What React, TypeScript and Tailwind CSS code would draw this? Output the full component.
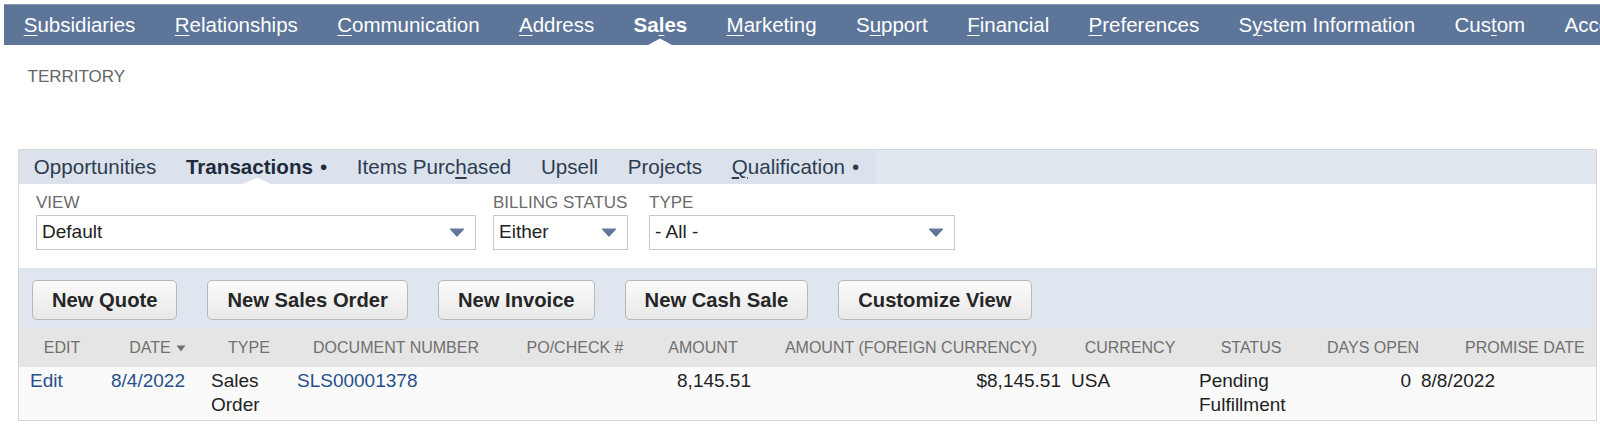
import React from "react";

type NavItem = { pre: string; u: string; post: string; active?: boolean };

const NAV: NavItem[] = [
  { pre: "", u: "S", post: "ubsidiaries" },
  { pre: "", u: "R", post: "elationships" },
  { pre: "", u: "C", post: "ommunication" },
  { pre: "", u: "A", post: "ddress" },
  { pre: "Sa", u: "l", post: "es", active: true },
  { pre: "", u: "M", post: "arketing" },
  { pre: "S", u: "u", post: "pport" },
  { pre: "", u: "F", post: "inancial" },
  { pre: "", u: "P", post: "references" },
  { pre: "S", u: "y", post: "stem Information" },
  { pre: "Cus", u: "t", post: "om" },
  { pre: "Accounting", u: "", post: "" },
];

function Arrow() {
  return (
    <svg width="16" height="9" viewBox="0 0 16 9" className="shrink-0">
      <path d="M1.5 1.2 L14.5 1.2 L8 8 Z" fill="#5f7699" stroke="#5f7699" strokeWidth="1.2" strokeLinejoin="round" />
    </svg>
  );
}

function Field({ label, value, w, ml }: { label: string; value: string; w: string; ml: string }) {
  return (
    <div className={`${w} ${ml} shrink-0`}>
      <div className="text-[17px] leading-[20px] text-[#6b6b6b] whitespace-nowrap">{label}</div>
      <div className="mt-[2px] h-[35px] border border-[#c8c8c8] bg-white flex items-center justify-between pl-[5px] pr-[10px] text-[19px] text-[#222]">
        <span>{value}</span>
        <Arrow />
      </div>
    </div>
  );
}

function Btn({ children }: { children: React.ReactNode }) {
  return (
    <div className="h-[40px] px-[19px] rounded-[5px] border border-[#b8b8b8] bg-linear-to-b from-[#fbfbfb] to-[#e8e8e8] flex items-center text-[20.2px] font-bold text-[#262626] whitespace-nowrap">
      {children}
    </div>
  );
}

const HEAD = "bg-[#e5e5e5] h-[38px] flex items-center text-[16px] text-[#707070] whitespace-nowrap";
const CELL = "bg-[#fafafa] pt-[2px] pb-[4px] text-[19px] leading-[23.5px] text-[#222]";
const LINK = "text-[#28508c]";

export default function App() {
  return (
    <div className="w-[1600px] h-[430px] bg-white overflow-hidden font-['Liberation_Sans',Arial,sans-serif]">
      {/* top nav */}
      <div className="ml-[4px] mt-[4px] w-[1596px] h-[41px] bg-[#5d7599] border-t border-[#8a9cb8] flex overflow-hidden whitespace-nowrap">
        {NAV.map((n, i) => (
          <div
            key={i}
            className={`relative shrink-0 px-[19.7px] text-[20.5px] leading-[40px] text-white ${n.active ? "font-bold" : ""}`}
          >
            {n.pre}
            {n.u && <span className="underline underline-offset-[3px] decoration-1">{n.u}</span>}
            {n.post}
            {n.active && (
              <svg width="24" height="7" viewBox="0 0 24 7" className="absolute bottom-0 left-1/2 -translate-x-1/2">
                <path d="M0 7 L12 0.5 L24 7 Z" fill="#ffffff" />
              </svg>
            )}
          </div>
        ))}
      </div>

      {/* territory */}
      <div className="mt-[22px] ml-[27.5px] text-[17px] leading-[20px] text-[#666]">TERRITORY</div>

      {/* panel */}
      <div className="mt-[62px] ml-[18px] w-[1579px] border border-[#d6d6d6]">
        {/* subtabs */}
        <div className="h-[34px] flex bg-[#e1e7ef]">
          <div className="flex bg-[#dbe2eb] pr-[2px]">
            {[
              { l: <>Opportunities</> },
              { l: <>Transactions</>, active: true, dot: true },
              { l: <>Items Purc<span className="underline underline-offset-[3px]">h</span>ased</> },
              { l: <>Upsell</> },
              { l: <>Projects</> },
              { l: <><span className="underline underline-offset-[3px]">Q</span>ualification</>, dot: true },
            ].map((t, i) => (
              <div
                key={i}
                className={`relative px-[14.8px] text-[20.6px] leading-[34px] whitespace-nowrap ${t.active ? "font-bold text-[#1e2a3d]" : "text-[#2e3c52]"}`}
              >
                {t.l}
                {t.dot && <span className="ml-[7px] font-normal">•</span>}
                {t.active && (
                  <svg width="28" height="7" viewBox="0 0 28 7" className="absolute bottom-0 left-1/2 -translate-x-1/2">
                    <path d="M0 7 L14 0.5 L28 7 Z" fill="#ffffff" />
                  </svg>
                )}
              </div>
            ))}
          </div>
        </div>

        {/* filters */}
        <div className="bg-white flex pl-[17px] pt-[9px] pb-[18px]">
          <Field label="VIEW" value="Default" w="w-[440px]" ml="ml-0" />
          <Field label="BILLING STATUS" value="Either" w="w-[135px]" ml="ml-[17px]" />
          <Field label="TYPE" value="- All -" w="w-[306px]" ml="ml-[21px]" />
        </div>

        {/* buttons */}
        <div className="bg-[#e0e6ef] flex gap-[30px] pl-[13px] pt-[12px] pb-[9px]">
          <Btn>New Quote</Btn>
          <Btn>New Sales Order</Btn>
          <Btn>New Invoice</Btn>
          <Btn>New Cash Sale</Btn>
          <Btn>Customize View</Btn>
        </div>

        {/* table */}
        <div className="grid grid-cols-[86px_101px_86px_208px_150px_106px_310px_128px_114px_108px_1fr]">
          <div className={`${HEAD} justify-center`}>EDIT</div>
          <div className={`${HEAD} justify-center pl-[4px]`}>
            DATE
            <svg width="10" height="7" viewBox="0 0 10 7" className="ml-[5px]">
              <path d="M0.5 0.5 L9.5 0.5 L5 6.5 Z" fill="#707070" />
            </svg>
          </div>
          <div className={`${HEAD} justify-center`}>TYPE</div>
          <div className={`${HEAD} justify-center`}>DOCUMENT NUMBER</div>
          <div className={`${HEAD} justify-center`}>PO/CHECK #</div>
          <div className={`${HEAD} justify-center`}>AMOUNT</div>
          <div className={`${HEAD} justify-center`}>AMOUNT (FOREIGN CURRENCY)</div>
          <div className={`${HEAD} justify-center`}>CURRENCY</div>
          <div className={`${HEAD} justify-center`}>STATUS</div>
          <div className={`${HEAD} relative z-10 justify-start pl-[19px] overflow-visible`}>DAYS OPEN</div>
          <div className={`${HEAD} justify-start pl-[49px]`}>PROMISE DATE</div>

          <div className={`${CELL} pl-[11px] ${LINK}`}>Edit</div>
          <div className={`${CELL} pl-[6px] ${LINK}`}>8/4/2022</div>
          <div className={`${CELL} pl-[5px]`}>Sales Order</div>
          <div className={`${CELL} pl-[5px] ${LINK}`}>SLS00001378</div>
          <div className={CELL}></div>
          <div className={`${CELL} pr-[5px] text-right`}>8,145.51</div>
          <div className={`${CELL} pr-[5px] text-right`}>$8,145.51</div>
          <div className={`${CELL} pl-[5px]`}>USA</div>
          <div className={`${CELL} pl-[5px]`}>Pending Fulfillment</div>
          <div className={`${CELL} pr-[5px] text-right`}>0</div>
          <div className={`${CELL} pl-[5px]`}>8/8/2022</div>
        </div>
      </div>
    </div>
  );
}
